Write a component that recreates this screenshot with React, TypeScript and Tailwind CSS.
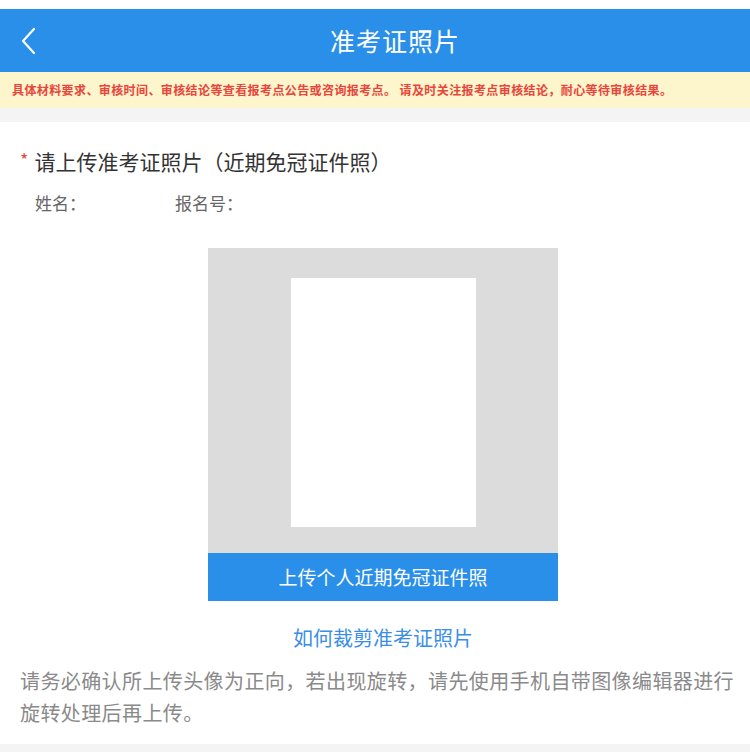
const App = () => {
  return (
    <div
      className="w-[750px] h-[752px] bg-white overflow-hidden"
      style={{ fontFamily: '"Noto Sans CJK SC", "Noto Sans", sans-serif' }}
    >
      <div className="h-[9px] bg-white" />
      <div className="relative h-[63px] bg-[#2a8fe8] flex items-center justify-center">
        <svg className="absolute left-[20px] top-[18px]" width="18" height="28" viewBox="0 0 18 28">
          <path d="M14 2 L3 14 L14 26" fill="none" stroke="#ffffff" strokeWidth="2.2" strokeLinecap="round" strokeLinejoin="round" />
        </svg>
        <h1 className="text-white text-[25px] ml-[40px] tracking-[1px]">准考证照片</h1>
      </div>
      <div className="h-[36px] bg-[#fdf5cc] flex items-center pl-[12px]">
        <p className="text-[#e8453c] text-[12px] font-bold tracking-[0.4px] whitespace-nowrap">
          具体材料要求、审核时间、审核结论等查看报考点公告或咨询报考点。 请及时关注报考点审核结论，耐心等待审核结果。
        </p>
      </div>
      <div className="h-[14px] bg-[#f4f4f4]" />
      <div className="h-[622px] bg-white pt-[24px]">
        <div className="flex items-center pl-[20px] h-[32px]">
          <span className="text-[#e84a3c] text-[18px] mr-[6px] mt-[-6px]">*</span>
          <span className="text-[#333333] text-[21px]">请上传准考证照片（近期免冠证件照）</span>
        </div>
        <div className="flex items-center pl-[35px] mt-[12px] h-[26px] text-[17px] text-[#666666]">
          <span className="w-[140px]">姓名：</span>
          <span>报名号：</span>
        </div>
        <div className="flex flex-col items-center pl-[16px] mt-[32px]">
          <div className="w-[350px] h-[305px] bg-[#dcdcdc] flex justify-center">
            <div className="w-[185px] h-[249px] bg-white mt-[30px]" />
          </div>
          <div className="w-[350px] h-[48px] bg-[#2a8fe8] flex items-center justify-center text-white text-[19px]">
            上传个人近期免冠证件照
          </div>
          <div className="mt-[21px] h-[32px] flex items-center text-[#3a8ee6] text-[20px]">
            如何裁剪准考证照片
          </div>
        </div>
        <p className="pl-[20px] pr-[10px] mt-[11px] text-[20px] leading-[32px] text-[#8a8a8a] tracking-[0.4px]">
          请务必确认所上传头像为正向，若出现旋转，请先使用手机自带图像编辑器进行旋转处理后再上传。
        </p>
      </div>
      <div className="h-[8px] bg-[#f4f4f4]" />
    </div>
  );
};

export default App;
